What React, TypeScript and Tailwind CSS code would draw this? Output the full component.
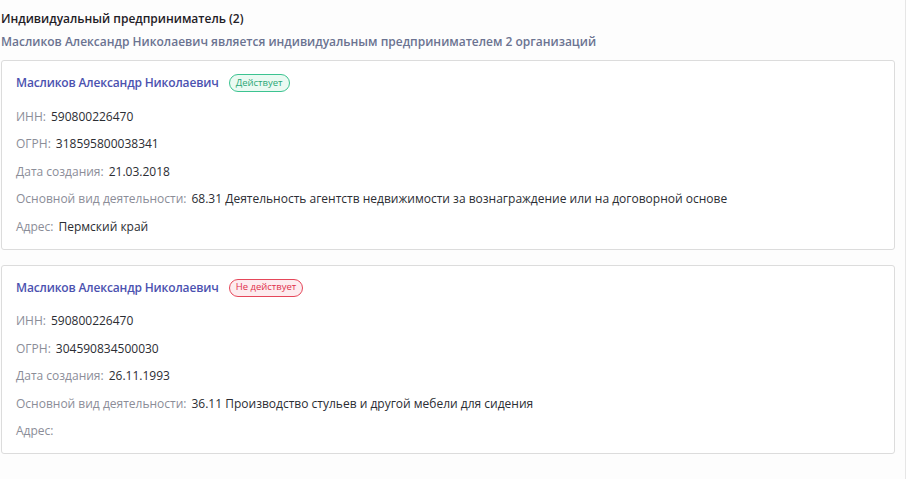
import React from 'react';

type Org = {
  name: string;
  active: boolean;
  inn: string;
  ogrn: string;
  created: string;
  activity: string;
  address: string;
};

const orgs: Org[] = [
  {
    name: 'Масликов Александр Николаевич',
    active: true,
    inn: '590800226470',
    ogrn: '318595800038341',
    created: '21.03.2018',
    activity: '68.31 Деятельность агентств недвижимости за вознаграждение или на договорной основе',
    address: 'Пермский край',
  },
  {
    name: 'Масликов Александр Николаевич',
    active: false,
    inn: '590800226470',
    ogrn: '304590834500030',
    created: '26.11.1993',
    activity: '36.11 Производство стульев и другой мебели для сидения',
    address: '',
  },
];

function Row({ label, value }: { label: string; value: string }) {
  return (
    <div className="flex items-center h-[27.5px] text-[12px]">
      <span className="text-[#8b8d98]">{label}:</span>
      {value && <span className="ml-[5px] text-[#2b2d33]">{value}</span>}
    </div>
  );
}

function OrgCard({ org }: { org: Org }) {
  return (
    <div className="bg-white border border-[#dcdcdc] rounded-[3px] px-[14px] pt-[11px] pb-[8px]">
      <div className="flex items-center h-[22px] gap-[10px]">
        <span className="text-[12px] font-semibold tracking-[-0.15px] text-[#4b52b0]">{org.name}</span>
        {org.active ? (
          <span className="h-[18px] px-[6px] flex items-center rounded-full border border-[#3cc391] bg-[#eafaf2] text-[9.5px] text-[#2aa876]">
            Действует
          </span>
        ) : (
          <span className="h-[18px] px-[6px] flex items-center rounded-full border border-[#e5475a] bg-[#fdecef] text-[9.5px] text-[#e0304a]">
            Не действует
          </span>
        )}
      </div>
      <div className="mt-[9px]">
        <Row label="ИНН" value={org.inn} />
        <Row label="ОГРН" value={org.ogrn} />
        <Row label="Дата создания" value={org.created} />
        <Row label="Основной вид деятельности" value={org.activity} />
        <Row label="Адрес" value={org.address} />
      </div>
    </div>
  );
}

export default function App() {
  return (
    <div className="w-[908px] h-[482px] bg-white" style={{ fontFamily: '"Open Sans", "Noto Sans", sans-serif' }}>
      <div className="w-[906px] h-[479px] bg-[#fdfdfd] border-r border-[#e6e6e6] pl-[1px] pr-[10px] pt-[11px]">
        <div className="text-[12px] leading-[16px] font-semibold text-[#1f2026]">
          Индивидуальный предприниматель (2)
        </div>
        <div className="mt-[7px] text-[12px] leading-[16px] font-semibold text-[#6b7391]">
          Масликов Александр Николаевич является индивидуальным предпринимателем 2 организаций
        </div>
        <div className="mt-[10px] flex flex-col gap-[15px]">
          {orgs.map((o, i) => (
            <OrgCard key={i} org={o} />
          ))}
        </div>
      </div>
    </div>
  );
}
